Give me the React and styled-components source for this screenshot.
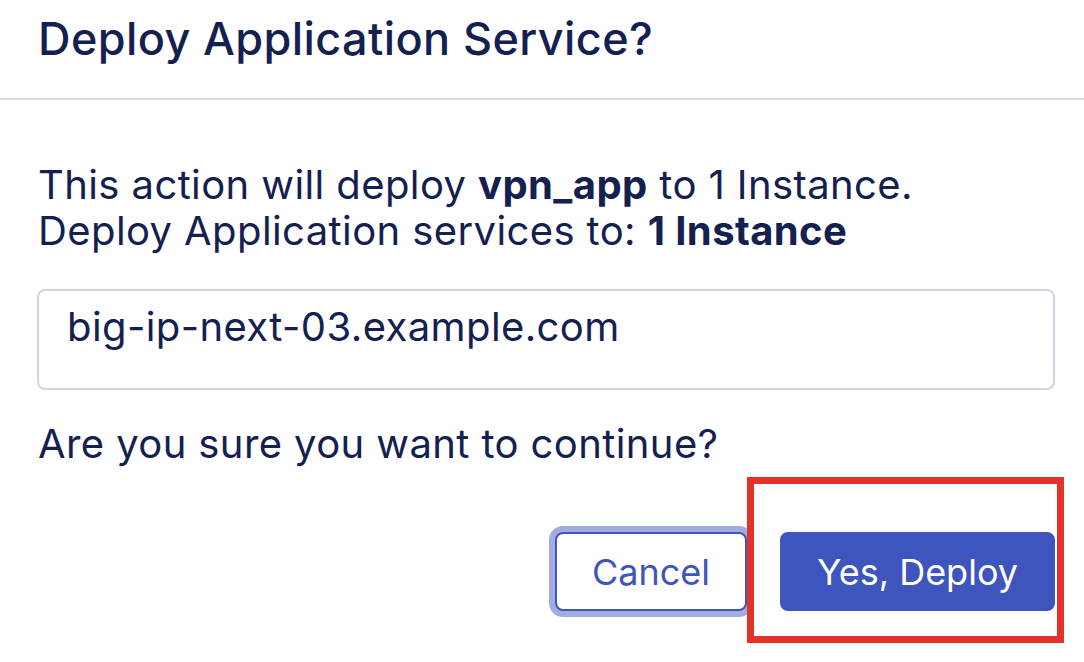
import React from "react";
import styled, { createGlobalStyle } from "styled-components";

const GlobalStyle = createGlobalStyle`
  html, body {
    margin: 0;
    padding: 0;
    background: #ffffff;
  }
  body {
    font-family: Inter, "Noto Sans", "Liberation Sans", sans-serif;
    color: #14204f;
  }
`;

const Dialog = styled.div`
  width: 1084px;
  height: 662px;
  background: #ffffff;
  overflow: hidden;
`;

const Header = styled.div`
  height: 100px;
  padding: 0 0 22px 38px;
  display: flex;
  align-items: center;
  border-bottom: 2px solid #d8dbe4;
  box-sizing: border-box;
`;

const Title = styled.h1`
  margin: 0;
  font-size: 45px;
  font-weight: 500;
  line-height: 1;
  letter-spacing: 0.4px;
  color: #14204f;
`;

const Body = styled.div`
  padding: 62px 29px 0 38px;
`;

const Message = styled.p`
  margin: 0;
  font-size: 40px;
  line-height: 46px;
  letter-spacing: 0.4px;
  color: #14204f;
`;

const InstanceBox = styled.div`
  margin-top: 35px;
  margin-left: -1px;
  height: 101px;
  box-sizing: border-box;
  border: 2px solid #d0d5e3;
  border-radius: 8px;
  padding: 13px 28px;
  font-size: 40px;
  line-height: 46px;
  letter-spacing: 0.4px;
  color: #14204f;
`;

const Question = styled(Message)`
  margin-top: 31px;
`;

const Actions = styled.div`
  margin-top: 65px;
  display: flex;
  justify-content: flex-end;
  gap: 33px;
`;

const Button = styled.button`
  height: 79px;
  box-sizing: border-box;
  border-radius: 8px;
  font-family: Inter, "Noto Sans", "Liberation Sans", sans-serif;
  font-size: 36px;
  font-weight: 400;
  padding: 0 35px;
  cursor: pointer;
  border: 2px solid #3d55bd;
  color: ${(p) => (p.primary ? "#ffffff" : "#3d55bd")};
  background: ${(p) => (p.primary ? "#3d55bd" : "#ffffff")};
  box-shadow: ${(p) => (p.focused ? "0 0 0 6px #a3acdf" : "none")};
`;

const Highlight = styled.div`
  position: relative;
  &::after {
    content: "";
    position: absolute;
    left: -33px;
    right: -9px;
    top: -55px;
    bottom: -32px;
    border: 7px solid #e4312a;
    pointer-events: none;
  }
`;

export default function App() {
  return (
    <Dialog>
      <GlobalStyle />
      <Header>
        <Title>Deploy Application Service?</Title>
      </Header>
      <Body>
        <Message>
          This action will deploy <b>vpn_app</b> to 1 Instance.
          <br />
          Deploy Application services to: <b>1 Instance</b>
        </Message>
        <InstanceBox>big-ip-next-03.example.com</InstanceBox>
        <Question>Are you sure you want to continue?</Question>
        <Actions>
          <Button focused>Cancel</Button>
          <Highlight>
            <Button primary>Yes, Deploy</Button>
          </Highlight>
        </Actions>
      </Body>
    </Dialog>
  );
}
